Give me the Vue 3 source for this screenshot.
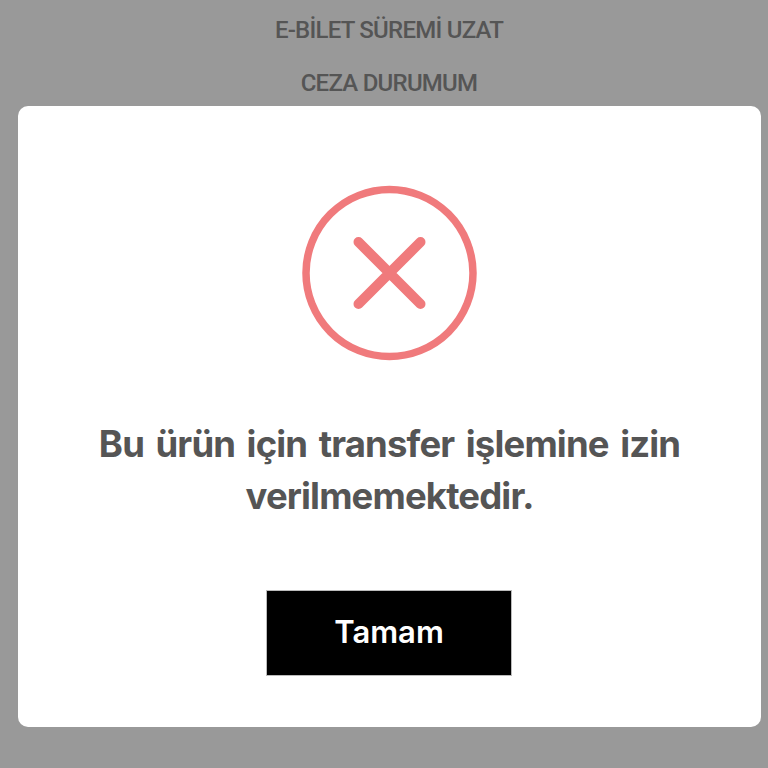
<script setup>
const menu = ['E-BİLET SÜREMİ UZAT', 'CEZA DURUMUM']
</script>

<template>
  <div class="page">
    <ul class="menu">
      <li v-for="item in menu" :key="item">{{ item }}</li>
    </ul>
    <div class="overlay">
      <div class="modal">
        <svg class="icon" viewBox="0 0 176 176" width="176" height="176">
          <circle cx="87.5" cy="88" r="83.5" fill="none" stroke="#f07a7c" stroke-width="7.5" />
          <path d="M56.5 57 L118.5 119 M118.5 57 L56.5 119" stroke="#f07a7c" stroke-width="10" stroke-linecap="round" />
        </svg>
        <p class="message">Bu ürün için transfer işlemine izin verilmemektedir.</p>
        <button class="ok">Tamam</button>
      </div>
    </div>
  </div>
</template>

<style>
html, body { margin: 0; }
</style>

<style scoped>
.page {
  position: relative;
  width: 768px;
  height: 768px;
  overflow: hidden;
  background: #999;
  font-family: Inter, "Liberation Sans", sans-serif;
}
.menu {
  list-style: none;
  margin: 0;
  padding: 15px 0 0 10px;
  display: flex;
  flex-direction: column;
  gap: 23px;
  align-items: center;
  color: #555;
  font-family: Roboto, sans-serif;
  font-size: 24px;
  font-weight: 500;
  line-height: 30px;
  letter-spacing: -0.75px;
}
.overlay {
  position: absolute;
  left: 18px;
  top: 106px;
}
.modal {
  width: 743px;
  height: 621px;
  box-sizing: border-box;
  padding-top: 79px;
  background: #fff;
  border-radius: 10px;
  display: flex;
  flex-direction: column;
  align-items: center;
}
.icon { display: block; }
.message {
  width: 640px;
  margin: 57px 0 0;
  color: #555;
  font-size: 36.5px;
  font-weight: 700;
  line-height: 52px;
  letter-spacing: -0.85px;
  word-spacing: 3.7px;
  text-align: center;
}
.ok {
  margin: 68px 1px 0 0;
  width: 246px;
  height: 86px;
  background: #000;
  border: 1px solid #bbb;
  color: #fff;
  font-family: inherit;
  font-size: 31px;
  font-weight: 600;
  padding: 0 0 3px;
}
</style>
